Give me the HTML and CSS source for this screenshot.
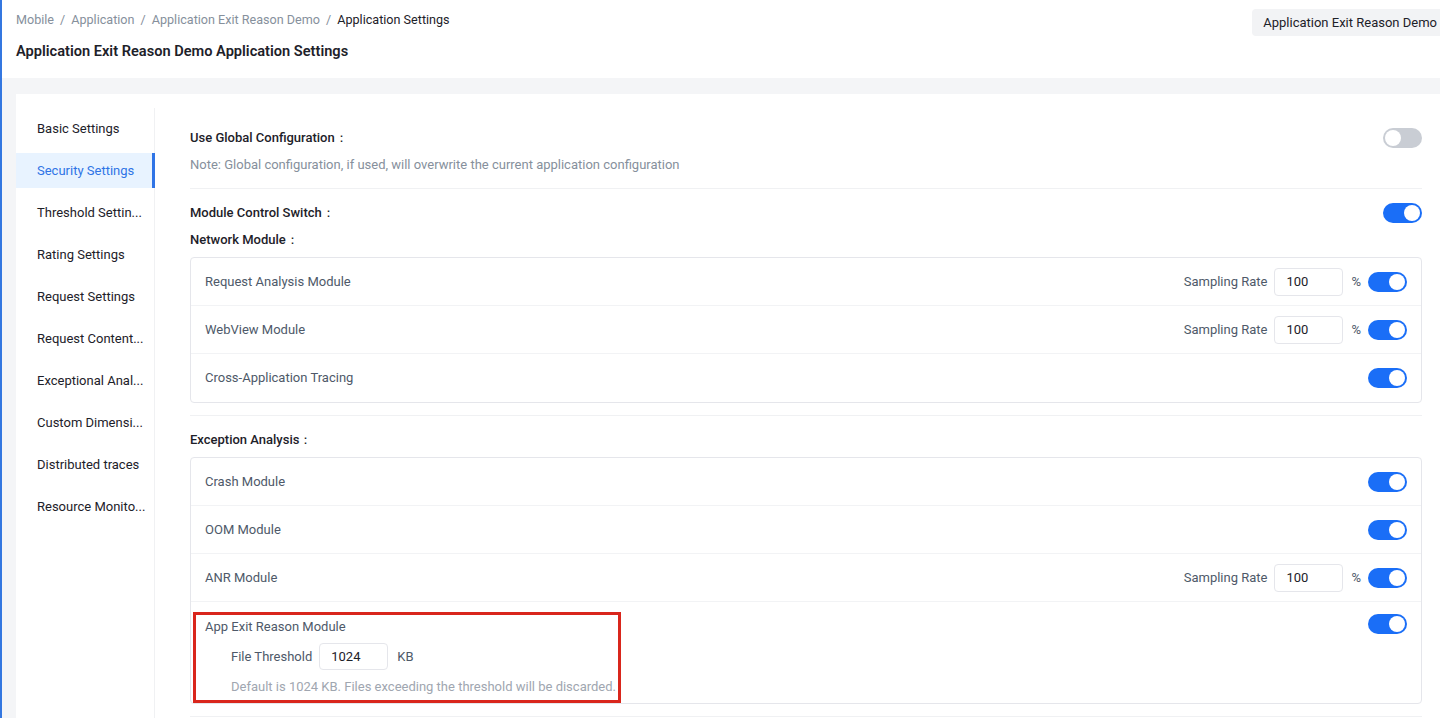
FILE: index.html
```html
<!DOCTYPE html>
<html lang="en">
<head>
    <meta charset="UTF-8">
    <title>Application Settings</title>
    <link rel="stylesheet" href="styles.css">
</head>
<body>
<div class="page">
    <div class="header">
        <div class="headLeft">
            <div class="crumbs">
                <span>Mobile</span><i>/</i><span>Application</span><i>/</i><span>Application Exit Reason Demo</span><i>/</i><b>Application Settings</b>
            </div>
            <h1 class="title">Application Exit Reason Demo Application Settings</h1>
        </div>
        <div class="appSelect">
            <span>Application Exit Reason Demo</span>
            <svg width="10" height="10" viewBox="0 0 10 10"><path d="M2 3.5l3 3 3-3" fill="none" stroke="#86909c" stroke-width="1.2"/></svg>
        </div>
    </div>
    <div class="main">
        <div class="card">
            <ul class="menu">
                <li>Basic Settings</li>
                <li class="active">Security Settings</li>
                <li>Threshold Settin...</li>
                <li>Rating Settings</li>
                <li>Request Settings</li>
                <li>Request Content...</li>
                <li>Exceptional Anal...</li>
                <li>Custom Dimensi...</li>
                <li>Distributed traces</li>
                <li>Resource Monito...</li>
            </ul>
            <div class="content">
                <div class="section first">
                    <div class="line">
                        <span class="label">Use Global Configuration：</span>
                        <span class="switch off"></span>
                    </div>
                    <p class="note">Note: Global configuration, if used, will overwrite the current application configuration</p>
                </div>
                <div class="section">
                    <div class="line">
                        <span class="label">Module Control Switch：</span>
                        <span class="switch"></span>
                    </div>
                    <div class="line sub">
                        <span class="label">Network Module：</span>
                    </div>
                    <div class="box">
                        <div class="row">
                            <span>Request Analysis Module</span>
                            <div class="ctrl">
                                <span class="rateLabel">Sampling Rate</span>
                                <span class="input">100</span>
                                <span class="unit">%</span>
                                <span class="switch"></span>
                            </div>
                        </div>
                        <div class="row">
                            <span>WebView Module</span>
                            <div class="ctrl">
                                <span class="rateLabel">Sampling Rate</span>
                                <span class="input">100</span>
                                <span class="unit">%</span>
                                <span class="switch"></span>
                            </div>
                        </div>
                        <div class="row">
                            <span>Cross-Application Tracing</span>
                            <div class="ctrl"><span class="switch"></span></div>
                        </div>
                    </div>
                </div>
                <div class="section">
                    <div class="line">
                        <span class="label">Exception Analysis：</span>
                    </div>
                    <div class="box">
                        <div class="row">
                            <span>Crash Module</span>
                            <div class="ctrl"><span class="switch"></span></div>
                        </div>
                        <div class="row">
                            <span>OOM Module</span>
                            <div class="ctrl"><span class="switch"></span></div>
                        </div>
                        <div class="row">
                            <span>ANR Module</span>
                            <div class="ctrl">
                                <span class="rateLabel">Sampling Rate</span>
                                <span class="input">100</span>
                                <span class="unit">%</span>
                                <span class="switch"></span>
                            </div>
                        </div>
                        <div class="row tall">
                            <div class="mark">
                                <div class="markTitle">App Exit Reason Module</div>
                                <div class="threshold">
                                    <span class="rateLabel">File Threshold</span>
                                    <span class="input">1024</span>
                                    <span class="unit">KB</span>
                                </div>
                                <div class="hint">Default is 1024 KB. Files exceeding the threshold will be discarded.</div>
                            </div>
                            <div class="ctrl top"><span class="switch"></span></div>
                        </div>
                    </div>
                </div>
            </div>
        </div>
    </div>
</div>
</body>
</html>
```
FILE: styles.css
```css
*{box-sizing:border-box;}
html,body{margin:0;padding:0;overflow:hidden;height:100%;}
body{font:13px/20px "Roboto","Liberation Sans",sans-serif;color:#1d2129;background:#fff;}
.page{border-left:2px solid #3477e0;min-height:100%;}

.header{display:flex;justify-content:space-between;align-items:flex-start;padding:10px 0 0 14px;height:78px;}
.crumbs{color:#86909c;line-height:20px;font-size:12.6px;}
.crumbs i{font-style:normal;margin:0 6px;}
.crumbs b{font-weight:normal;color:#1d2129;}
.title{margin:11px 0 0;font-size:14.6px;line-height:20px;font-weight:600;}
.appSelect{display:flex;align-items:center;gap:8px;margin-top:-1px;margin-right:-15px;height:27px;padding:0 0 0 11px;background:#f2f3f5;border-radius:4px;white-space:nowrap;}

.main{background:#f4f5f7;padding:16px 0 0 14px;height:calc(100vh - 78px);}
.card{background:#fff;display:flex;height:100%;}

.menu{list-style:none;margin:14px 0 0;padding:3px 0 0;width:139px;flex:none;border-right:1px solid #f0f1f3;display:flex;flex-direction:column;gap:7px;}
.menu li{height:35px;line-height:35px;padding-left:21px;color:#1d2129;white-space:nowrap;}
.menu li.active{background:#e8f3ff;color:#2f74e6;border-right:3px solid #2f74e6;margin-right:-1px;}

.content{flex:1;padding:0 18px 0 35px;}
.section{border-bottom:1px solid #f0f1f3;padding:14px 0 12px;}
.section.first{padding:34px 0 13px;}
.line{display:flex;justify-content:space-between;align-items:center;height:20px;}
.line.sub{margin-top:7px;}
.label{font-weight:500;}
.note{margin:7px 0 0;color:#86909c;}

.box{margin-top:7px;border:1px solid #e5e6eb;border-radius:4px;}
.row{display:flex;justify-content:space-between;align-items:center;height:48px;padding:0 14px;color:#4e5969;border-bottom:1px solid #f2f3f5;}
.row:last-child{border-bottom:none;}
.row.tall{height:101px;align-items:flex-start;padding-left:2px;}
.ctrl{display:flex;align-items:center;}
.ctrl.top{margin-top:12px;}
.rateLabel{color:#4e5969;margin-right:7px;}
.input{display:inline-block;width:69px;height:28px;line-height:26px;border:1px solid #e5e6eb;border-radius:4px;padding-left:11px;color:#1d2129;}
.unit{color:#4e5969;margin:0 7px 0 8px;}

.switch{display:inline-block;position:relative;width:39px;height:20px;border-radius:10px;background:#1a6ef7;}
.switch:after{content:"";position:absolute;top:2px;right:2px;width:16px;height:16px;border-radius:50%;background:#fff;}
.switch.off{background:#c9cdd4;}
.switch.off:after{right:auto;left:2px;}

.mark{margin-top:10px;border:3px solid #d9261c;padding:2px 2px 4px 9px;}
.markTitle{color:#4e5969;}
.threshold{display:flex;align-items:center;margin:6px 0 0 26px;}
.threshold .input{height:27px;}
.threshold .unit{margin-left:9px;}
.hint{margin:8px 0 0 26px;color:#a0a6b0;line-height:18px;}
```
